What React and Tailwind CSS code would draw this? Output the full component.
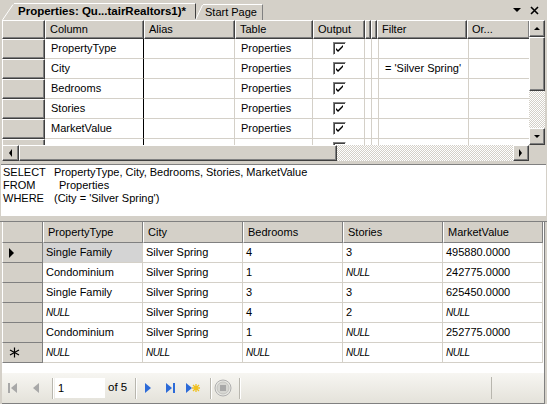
import React from 'react';

const raised =
  'bg-[#d4d0c8] border border-t-white border-l-white border-r-[#404040] border-b-[#404040] shadow-[inset_-1px_-1px_0_#808080]';
const dither =
  'bg-[repeating-conic-gradient(#d4d0c8_0_25%,#ffffff_0_50%)] bg-[length:2px_2px]';

const Arrow = ({ dir }) => {
  const pts = {
    up: '1,5 4,2 7,5',
    down: '1,2 4,5 7,2',
    left: '5,0 2,4 5,8',
    right: '2,0 5,4 2,8',
  }[dir];
  return (
    <svg width="8" height="8" viewBox="0 0 8 8">
      <polygon points={pts} fill="#000" />
    </svg>
  );
};

const ScrollBtn = ({ dir, className = '' }) => (
  <div className={`${raised} flex items-center justify-center ${className}`}>
    <Arrow dir={dir} />
  </div>
);

const Check = () => (
  <div className="w-[13px] h-[13px] bg-white border border-t-[#808080] border-l-[#808080] border-r-white border-b-white shadow-[inset_1px_1px_0_#404040] flex items-center justify-center">
    <svg width="9" height="9" viewBox="0 0 9 9">
      <path d="M1 4 L3 6 L8 1 L8 3 L3 8 L1 6 Z" fill="#000" />
    </svg>
  </div>
);

const criteriaCols = [
  { w: 'w-[99px]', label: 'Column', key: 'col', line: 'border-r-black' },
  { w: 'w-[91px]', label: 'Alias', key: 'alias' },
  { w: 'w-[78px]', label: 'Table', key: 'table' },
  { w: 'w-[52px]', label: 'Output', key: 'out' },
  { w: 'w-[5px]', label: '', key: 'n1' },
  { w: 'w-[6px]', label: '', key: 'n2' },
  { w: 'w-[90px]', label: 'Filter', key: 'filter' },
  { w: 'w-[63px]', label: 'Or...', key: 'or' },
];

const criteriaRows = [
  { col: 'PropertyType', table: 'Properties', out: true },
  { col: 'City', table: 'Properties', out: true, filter: "= 'Silver Spring'" },
  { col: 'Bedrooms', table: 'Properties', out: true },
  { col: 'Stories', table: 'Properties', out: true },
  { col: 'MarketValue', table: 'Properties', out: true },
  { col: '', table: '', out: true },
];

const N = 'NULL';
const results = [
  ['Single Family', 'Silver Spring', '4', '3', '495880.0000'],
  ['Condominium', 'Silver Spring', '1', N, '242775.0000'],
  ['Single Family', 'Silver Spring', '3', '3', '625450.0000'],
  [N, 'Silver Spring', '4', '2', N],
  ['Condominium', 'Silver Spring', '1', N, '252775.0000'],
  [N, N, N, N, N],
];
const resultCols = ['PropertyType', 'City', 'Bedrooms', 'Stories', 'MarketValue'];

const TabSlant = () => (
  <svg width="12" height="17" viewBox="0 0 12 17" className="shrink-0">
    <polygon points="0,17 11,1 12,1 12,17" fill="#d4d0c8" />
    <line x1="0.5" y1="17" x2="11" y2="1.5" stroke="#fff" />
  </svg>
);

// toolbar separator: dark line + white line
const Sep = ({ className = '' }) => (
  <div className={`flex h-[21px] shrink-0 ${className}`}>
    <div className="w-px bg-[#b8b6ae]" />
    <div className="w-px bg-white" />
  </div>
);

export default function App() {
  return (
    <div className="w-[547px] h-[404px] bg-[#d4d0c8] font-['Liberation_Sans',Arial,sans-serif] text-[11px] text-black overflow-hidden flex flex-col select-none">
      {/* tab strip */}
      <div className="h-[20px] flex items-end pl-[2px] shrink-0">
        <div className="flex items-end h-[18px]">
          <TabSlant />
          <div className="h-[17px] w-[182px] border-t border-white border-r border-r-[#404040] flex items-center pl-[4px] font-bold text-[11.5px]">
            Properties: Qu...tairRealtors1)*
          </div>
        </div>
        <div className="flex items-end h-[17px] -ml-[1px]">
          <svg width="8" height="16" viewBox="0 0 8 16" className="shrink-0">
            <line x1="0.5" y1="16" x2="7.5" y2="1" stroke="#fff" />
          </svg>
          <div className="h-[16px] w-[60px] border-t border-white border-r border-r-[#808080] flex items-center pl-[2px]">
            Start Page
          </div>
        </div>
        <div className="flex-1" />
        <div className="flex items-center gap-[9px] h-[20px] pr-[8px] pt-[1px]">
          <svg width="8" height="5" viewBox="0 0 8 5">
            <polygon points="0,0 8,0 4,4" fill="#000" />
          </svg>
          <svg width="9" height="9" viewBox="0 0 9 9">
            <path d="M1 1 L8 8 M8 1 L1 8" stroke="#000" strokeWidth="1.6" />
          </svg>
        </div>
      </div>

      {/* criteria pane */}
      <div className="h-[141px] px-[2px] grid grid-cols-[527px_16px] grid-rows-[125px_16px] shrink-0">
        <div className="overflow-hidden bg-white">
          <div className="flex h-[19px]">
            <div className={`${raised} w-[43px] shrink-0`} />
            {criteriaCols.map((c) => (
              <div key={c.key} className={`${raised} ${c.w} shrink-0 pl-[4px] flex items-center`}>
                {c.label}
              </div>
            ))}
          </div>
          {criteriaRows.map((r, i) => (
            <div key={i} className="flex h-[20px]">
              <div className={`${raised} w-[43px] shrink-0`} />
              {criteriaCols.map((c) => (
                <div
                  key={c.key}
                  className={`${c.w} shrink-0 border-r border-b border-[#d4d0c8] ${c.line || ''} flex items-center ${
                    c.key === 'out' ? 'justify-center pl-[2px]' : 'pl-[6px]'
                  } overflow-hidden whitespace-nowrap`}
                >
                  {c.key === 'out' ? r.out && <Check /> : r[c.key] || ''}
                </div>
              ))}
            </div>
          ))}
        </div>
        {/* vertical scrollbar */}
        <div className="flex flex-col">
          <ScrollBtn dir="up" className="h-[17px] w-[16px]" />
          <div className={`${raised} h-[54px]`} />
          <div className={`flex-1 ${dither}`} />
          <ScrollBtn dir="down" className="h-[17px] w-[16px]" />
        </div>
        {/* horizontal scrollbar */}
        <div className="flex">
          <ScrollBtn dir="left" className="w-[17px] h-[16px]" />
          <div className={`${raised} w-[318px] h-[16px]`} />
          <div className={`flex-1 ${dither}`} />
          <ScrollBtn dir="right" className="w-[16px] h-[16px]" />
        </div>
        <div className="bg-[#d4d0c8]" />
      </div>

      {/* sql pane */}
      <div className="h-[3px] shrink-0" />
      <div className="h-[52px] mx-[1px] bg-white border-t border-[#808080] pl-[2px] pt-[1px] leading-[13px] shrink-0">
        <div className="flex">
          <span className="w-[51px]">SELECT</span>
          <span>PropertyType, City, Bedrooms, Stories, MarketValue</span>
        </div>
        <div className="flex">
          <span className="w-[56px]">FROM</span>
          <span>Properties</span>
        </div>
        <div className="flex">
          <span className="w-[51px]">WHERE</span>
          <span>(City = 'Silver Spring')</span>
        </div>
      </div>
      <div className="h-[6px] border-b border-[#808080] shrink-0" />

      {/* results pane */}
      <div className="h-[151px] mx-[2px] bg-white border-r border-[#808080] shrink-0">
        <div className="flex h-[21px]">
          <div className="w-[41px] shrink-0 bg-[#d4d0c8] border-l border-white border-r border-r-[#808080] border-b border-b-[#808080]" />
          {resultCols.map((c) => (
            <div
              key={c}
              className="w-[100px] shrink-0 bg-[#d4d0c8] border-l border-white border-r border-r-[#808080] border-b border-b-[#808080] pl-[4px] flex items-center"
            >
              {c}
            </div>
          ))}
        </div>
        {results.map((row, i) => (
          <div key={i} className="flex h-[20px]">
            <div className="w-[41px] shrink-0 bg-[#d4d0c8] border-l border-white border-r border-r-[#808080] border-b border-b-[#808080] pl-[6px] flex items-center">
              {i === 0 && (
                <svg width="6" height="10" viewBox="0 0 6 10">
                  <polygon points="0,0 5,5 0,10" fill="#000" />
                </svg>
              )}
              {i === results.length - 1 && (
                <svg width="11" height="11" viewBox="0 0 11 11">
                  <path d="M5.5 0.5 V10.5 M1 3 L10 8 M10 3 L1 8" stroke="#000" strokeWidth="1.2" />
                </svg>
              )}
            </div>
            {row.map((v, j) => (
              <div
                key={j}
                className={`w-[100px] shrink-0 border-r border-b border-[#d4d0c8] pl-[3px] flex items-center whitespace-nowrap ${
                  i === 0 && j === 0 ? 'bg-[#d4d4d4]' : ''
                } ${v === N ? 'italic text-[10px] tracking-[-0.5px]' : ''}`}
              >
                {v}
              </div>
            ))}
          </div>
        ))}
      </div>

      {/* navigator */}
      <div className="flex-1 mx-[2px] bg-gradient-to-b from-[#f7f6f2] to-[#e4e2da] border-r border-[#808080] border-b border-b-[#808080] flex items-center pl-[4px]">
        <svg width="14" height="14" viewBox="0 0 14 14" className="shrink-0">
          <rect x="2" y="2" width="2" height="10" fill="#a8a8a8" />
          <polygon points="11,2 5,7 11,12" fill="#a8a8a8" />
        </svg>
        <svg width="14" height="14" viewBox="0 0 14 14" className="ml-[9px] shrink-0">
          <polygon points="10,2 4,7 10,12" fill="#a8a8a8" />
        </svg>
        <Sep className="ml-[9px]" />
        <div className="w-[50px] h-[20px] bg-white flex items-center pl-[3px] ml-[1px] shrink-0">1</div>
        <span className="ml-[3px] text-[11.5px] shrink-0">of 5</span>
        <Sep className="ml-[8px]" />
        <svg width="14" height="14" viewBox="0 0 14 14" className="ml-[4px] shrink-0">
          <polygon points="4,2 10,7 4,12" fill="#2d6bd8" />
        </svg>
        <svg width="14" height="14" viewBox="0 0 14 14" className="ml-[9px] shrink-0">
          <polygon points="2,2 8,7 2,12" fill="#2d6bd8" />
          <rect x="9" y="2" width="2" height="10" fill="#2d6bd8" />
        </svg>
        <svg width="16" height="14" viewBox="0 0 16 14" className="ml-[7px] shrink-0">
          <polygon points="1,2 7,7 1,12" fill="#2d6bd8" />
          <path d="M11 3 V11 M7 7 H15 M8 4 L14 10 M14 4 L8 10" stroke="#f0c020" strokeWidth="1.3" />
        </svg>
        <Sep className="ml-[9px]" />
        <svg width="18" height="18" viewBox="0 0 18 18" className="ml-[2px] shrink-0">
          <circle cx="9" cy="9" r="8" fill="#e8e8e4" stroke="#b0b0b0" />
          <circle cx="9" cy="9" r="6" fill="#d6d6d2" stroke="#c4c4c0" />
          <rect x="6" y="6" width="6" height="6" fill="#a8a8a8" />
        </svg>
        <Sep className="ml-[7px]" />
        <div className="flex-1" />
        <div className="w-px h-[22px] bg-[#b8b6ae] mr-[52px]" />
      </div>
    </div>
  );
}
